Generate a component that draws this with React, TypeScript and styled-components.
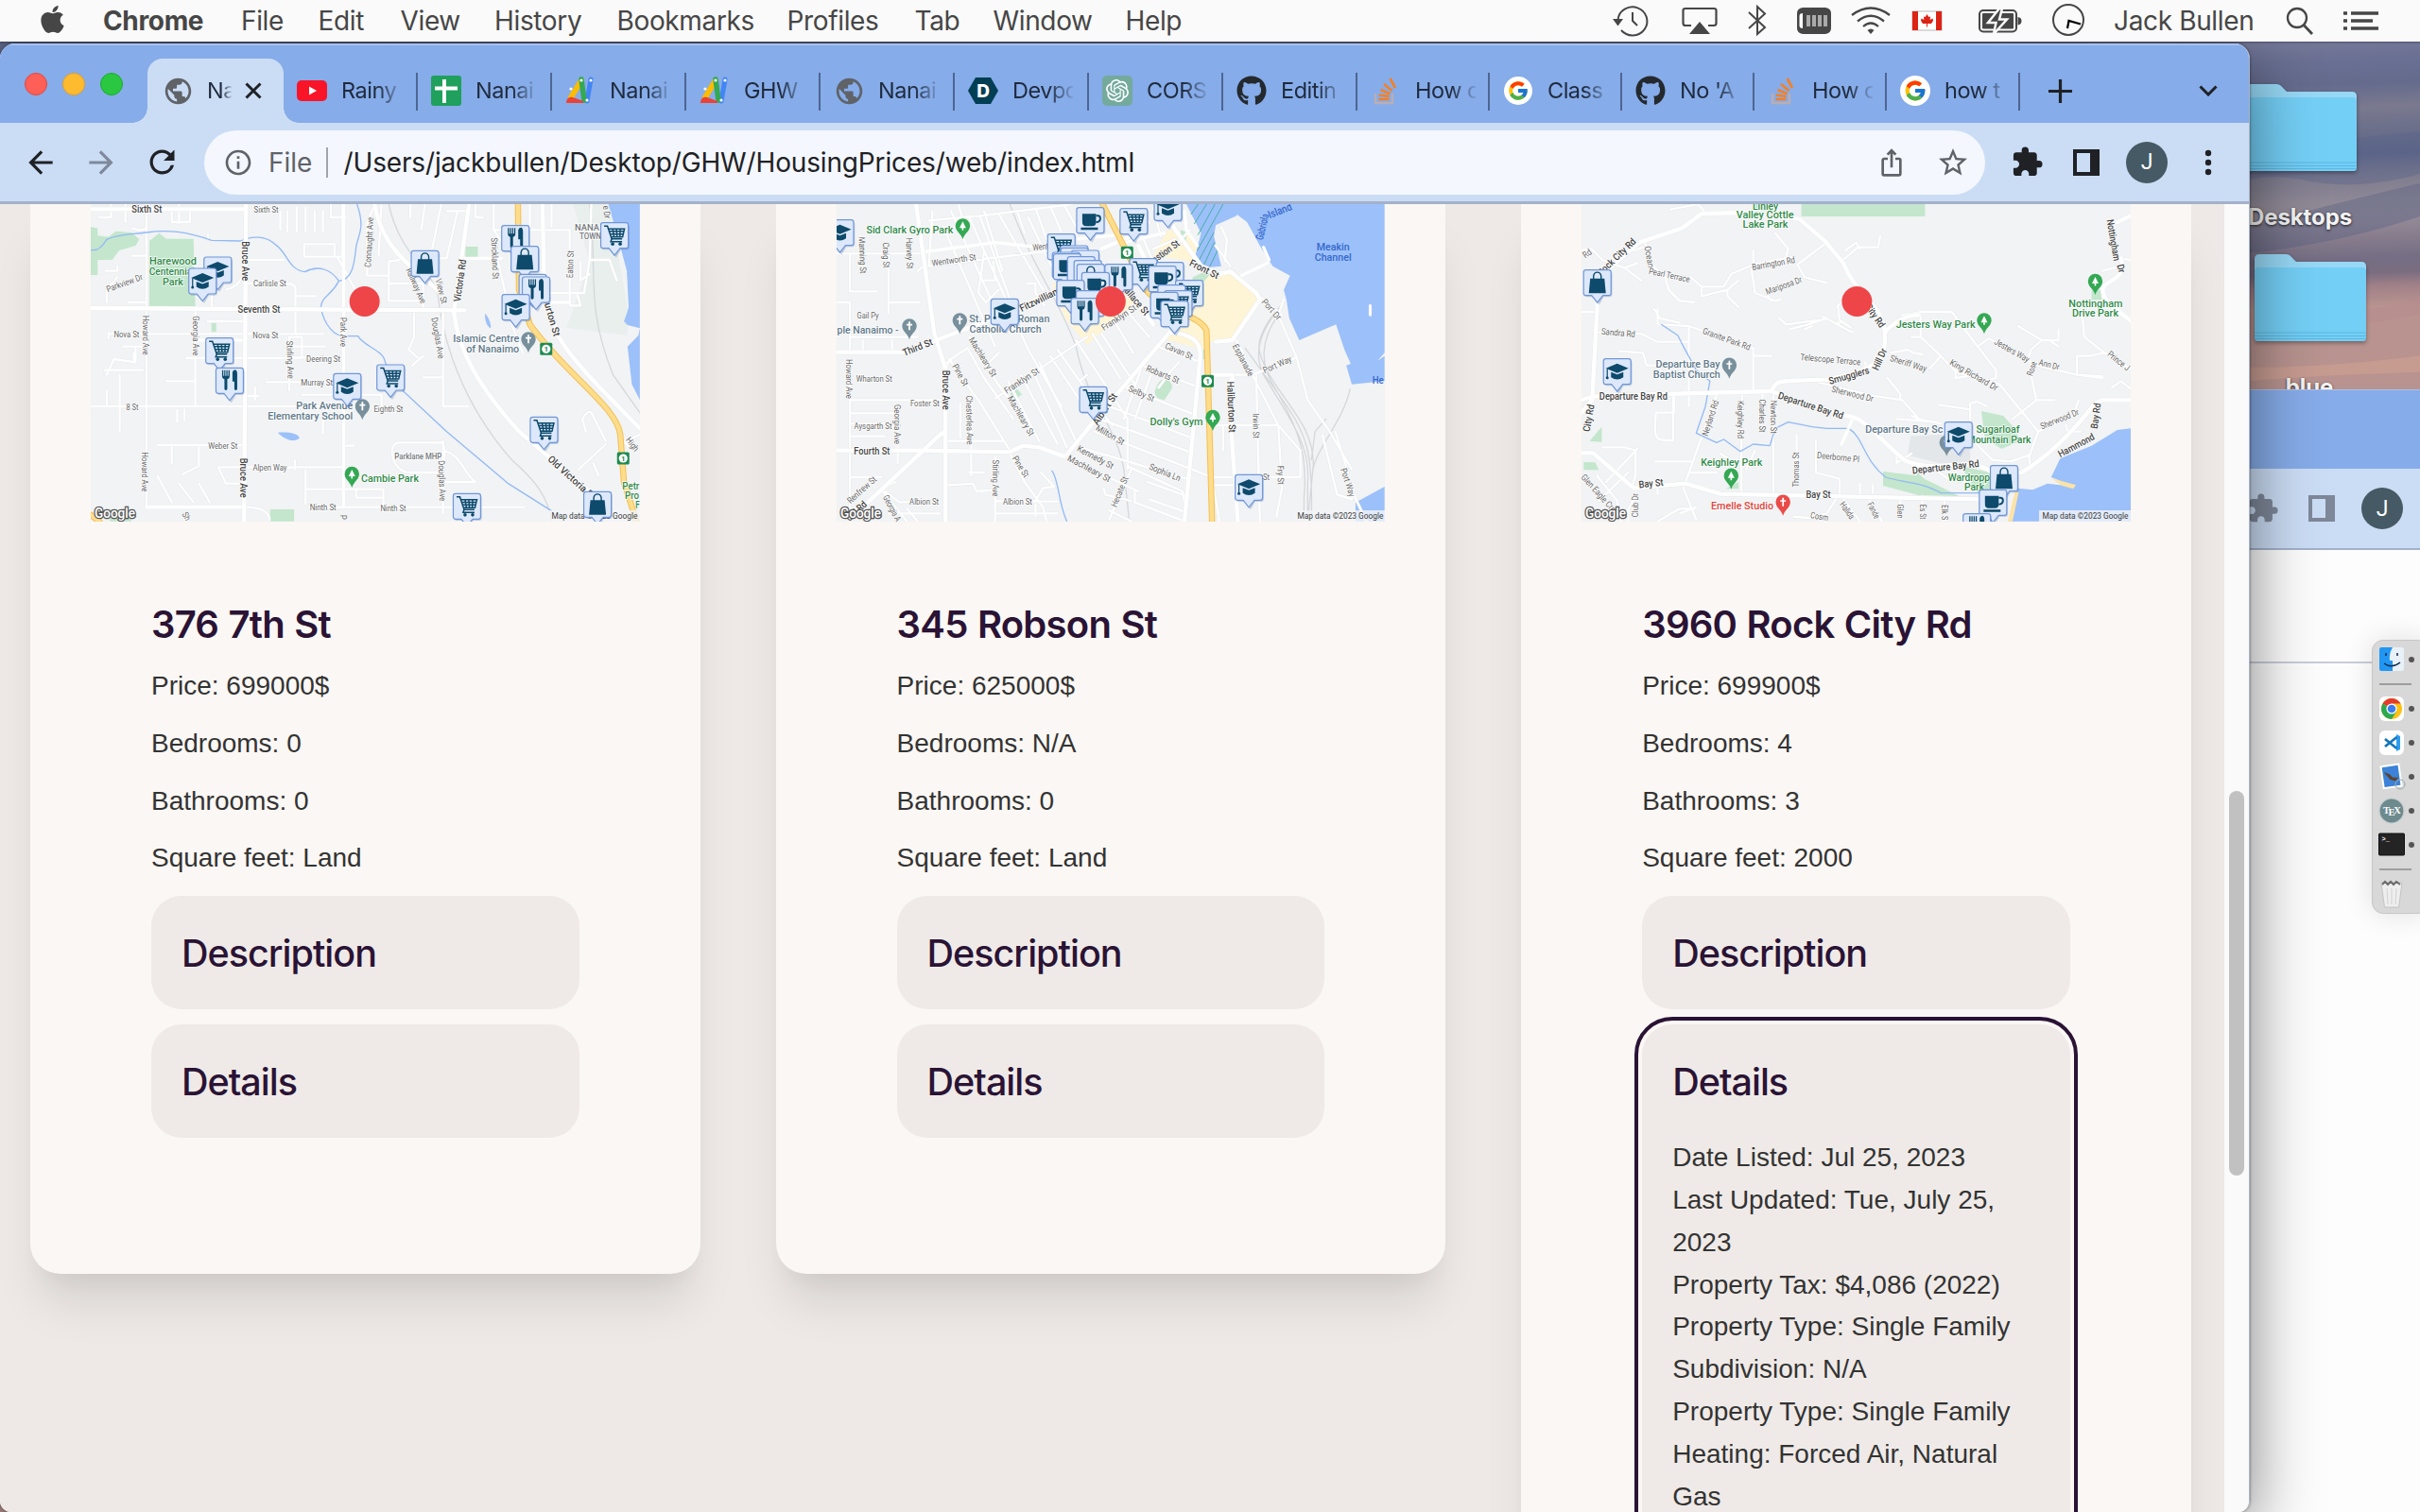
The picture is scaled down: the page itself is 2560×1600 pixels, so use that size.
import React from "react";
import styled, { createGlobalStyle } from "styled-components";
import { FaApple, FaGithub } from "react-icons/fa";
import { FcGoogle } from "react-icons/fc";
import { SiOpenai } from "react-icons/si";
import {
  MdArrowBack, MdArrowForward, MdRefresh, MdInfoOutline, MdIosShare, MdStarBorder,
  MdExtension, MdPublic,
} from "react-icons/md";

const Global = createGlobalStyle`
  html, body { margin: 0; padding: 0; }
  body { width: 2560px; height: 1600px; overflow: hidden; }
  * { box-sizing: border-box; }
`;

const UI = `Inter, "Liberation Sans", sans-serif`;

/* ---------- Desktop ---------- */

const Desktop = styled.div`
  position: relative;
  width: 2560px;
  height: 1600px;
  overflow: hidden;
  font-family: ${UI};
  background: linear-gradient(178deg, #5b6486 40px, #6f7496 90px, #777a9a 125px, #6a7093 150px,
    #646b8d 175px, #7a798f 200px, #6b6f8a 225px, #5f6687 250px, #7d7b8e 272px, #8f8996 300px, #928896 322px,
    #857b8b 340px, #756e84 360px, #7a6d80 376px, #a08088 390px, #b8938f 412px);
`;

const Wisps = styled.svg`
  position: absolute;
  left: 2370px;
  top: 44px;
`;

const MenuBar = styled.header`
  position: absolute;
  z-index: 5;
  left: 0;
  top: 0;
  width: 2560px;
  height: 44px;
  display: flex;
  align-items: center;
  background: #fafafa;
  color: #464646;
  font-size: 28px;
  letter-spacing: -0.35px;
  padding: 0 41px 0 40px;
  box-shadow: 0 1px 2px rgba(0, 0, 0, 0.35);
`;

const AppleMark = styled(FaApple)`
  width: 31px;
  height: 33px;
  margin-top: -4px;
  flex: none;
`;

const MenuItems = styled.nav`
  display: flex;
  margin-left: 38px;
  flex: 1;
`;

const MenuItem = styled.span<{ $w: number; $bold?: boolean }>`
  width: ${(p) => p.$w}px;
  font-weight: ${(p) => (p.$bold ? 700 : 400)};
  white-space: nowrap;
`;

const StatusArea = styled.div`
  display: flex;
  align-items: center;
  width: 813px;
  flex: none;
`;

const StatusSlot = styled.div<{ $w: number }>`
  width: ${(p) => p.$w}px;
  height: 44px;
  display: flex;
  align-items: center;
  flex: none;
  white-space: nowrap;
  svg { display: block; overflow: visible; }
`;

const DesktopItem = styled.figure<{ $x: number; $y: number }>`
  position: absolute;
  left: ${(p) => p.$x}px;
  top: ${(p) => p.$y}px;
  width: 160px;
  margin: 0;
  display: flex;
  flex-direction: column;
  align-items: center;
  gap: 30px;
  svg { display: block; filter: drop-shadow(0 2px 2px rgba(0, 0, 0, 0.35)); }
`;

const DesktopLabel = styled.figcaption`
  font-size: 24px;
  line-height: 32px;
  font-weight: 700;
  letter-spacing: -0.1px;
  color: #f4f4f4;
  margin-left: -2px;
  text-shadow: 0 1px 3px rgba(0, 0, 0, 0.8);
`;

/* ---------- Windows ---------- */

const BackWindow = styled.section`
  position: absolute;
  left: 1900px;
  top: 412px;
  width: 760px;
  height: 1400px;
  background: #fdfdfd;
  border-top: 1px solid #a9c1ee;
`;

const BackStrip = styled.div`
  height: 83px;
  background: #86ace9;
`;

const BackToolbar = styled.div`
  height: 86px;
  display: flex;
  align-items: center;
  padding-left: 450px;
  background: #cbddf5;
  border-bottom: 2px solid #a3b1cb;
`;

const BackLine = styled.div`
  height: 120px;
  border-bottom: 2px solid #c9cdd9;
`;

const BrowserWindow = styled.section`
  position: absolute;
  left: 0;
  top: 46px;
  width: 2380px;
  height: 1554px;
  display: flex;
  flex-direction: column;
  border-radius: 16px 16px 12px 12px;
  overflow: hidden;
  background: #fafafa;
  border-right: 1px solid #aab4c6;
`;

const WindowShadow = styled.div`
  position: absolute;
  left: 0;
  top: 46px;
  width: 2380px;
  height: 1554px;
  border-radius: 16px 16px 12px 12px;
  box-shadow: 0 20px 70px rgba(0, 0, 0, 0.5), 0 0 3px rgba(0, 0, 0, 0.5);
`;

const TabStrip = styled.div`
  height: 84px;
  flex: none;
  display: flex;
  align-items: flex-end;
  background: #86ace9;
  border-top: 2px solid #a9c4f0;
`;

const Lights = styled.div`
  display: flex;
  gap: 16px;
  width: 156px;
  height: 82px;
  padding: 29px 0 0 26px;
  flex: none;
`;

const Light = styled.i<{ $c: string; $b: string }>`
  width: 24px;
  height: 24px;
  border-radius: 50%;
  background: ${(p) => p.$c};
  border: 1px solid ${(p) => p.$b};
`;

const ActiveTab = styled.div`
  position: relative;
  width: 144px;
  height: 68px;
  flex: none;
  display: flex;
  align-items: center;
  padding-left: 16px;
  border-radius: 16px 16px 0 0;
  background: #cbddf5;
  &::before, &::after {
    content: "";
    position: absolute;
    bottom: 0;
    width: 16px;
    height: 16px;
  }
  &::before { left: -16px; background: radial-gradient(circle at 0 0, transparent 15.5px, #cbddf5 16px); }
  &::after { right: -16px; background: radial-gradient(circle at 100% 0, transparent 15.5px, #cbddf5 16px); }
`;

const Tab = styled.div<{ $w: number }>`
  width: ${(p) => p.$w}px;
  height: 68px;
  flex: none;
  display: flex;
  align-items: center;
  padding-left: 13px;
  background: linear-gradient(#4d6592, #4d6592) right 15px / 2px 40px no-repeat;
`;

const Favicon = styled.span`
  width: 34px;
  height: 34px;
  display: flex;
  align-items: center;
  justify-content: center;
  flex: none;
  svg { display: block; flex: none; }
`;

const TabTitle = styled.span<{ $w: number }>`
  width: ${(p) => p.$w}px;
  flex: none;
  margin-left: 14px;
  overflow: hidden;
  white-space: nowrap;
  font-size: 23.5px;
  line-height: 34px;
  letter-spacing: -0.5px;
  color: #1f2a3d;
  -webkit-mask-image: linear-gradient(90deg, #000 60%, rgba(0, 0, 0, 0.1) 100%);
  mask-image: linear-gradient(90deg, #000 60%, rgba(0, 0, 0, 0.1) 100%);
`;

const CloseIcon = styled.svg`
  margin-left: 14px;
`;

const StripTail = styled.div`
  flex: 1;
  height: 68px;
  display: flex;
  align-items: center;
  justify-content: space-between;
  padding: 0 33px 0 30px;
`;

const Toolbar = styled.div`
  height: 86px;
  flex: none;
  display: flex;
  align-items: center;
  background: #cbddf5;
  border-bottom: 3px solid #a3b1cb;
  padding-left: 24px;
  color: #1f2125;
`;

const NavButton = styled.span<{ $w: number; $dim?: boolean }>`
  width: ${(p) => p.$w}px;
  display: flex;
  flex: none;
  color: ${(p) => (p.$dim ? "#7f899b" : "#1f2125")};
`;

const Omnibox = styled.div`
  width: 1884px;
  height: 68px;
  border-radius: 34px;
  flex: none;
  display: flex;
  align-items: center;
  padding: 0 14px 0 20px;
  background: #f4f7fd;
  font-size: 28px;
  color: #5f6368;
`;

const Scheme = styled.span`
  width: 61px;
  margin-left: 16px;
  letter-spacing: 0;
`;

const Divider = styled.i`
  width: 1.5px;
  height: 32px;
  background: #a0a5ad;
`;

const Url = styled.span`
  flex: 1;
  margin-left: 17px;
  color: #202124;
  letter-spacing: -0.15px;
  white-space: nowrap;
`;

const OmniIcon = styled.span<{ $w: number }>`
  width: ${(p) => p.$w}px;
  display: flex;
  flex: none;
`;

const ToolIcons = styled.div<{ $dim?: boolean }>`
  display: flex;
  align-items: center;
  gap: 31px;
  padding-left: 27px;
  color: ${(p) => (p.$dim ? "#7e8899" : "#1f2125")};
`;

const Avatar = styled.span`
  width: 44px;
  height: 44px;
  margin-left: -3px;
  border-radius: 50%;
  display: flex;
  align-items: center;
  justify-content: center;
  background: #455a64;
  color: #fff;
  font-family: Roboto, sans-serif;
  font-size: 23px;
`;

const MoreIcon = styled.svg`
  margin-left: 8px;
`;

const Viewport = styled.main`
  flex: 1;
  min-height: 0;
  display: flex;
`;

const Page = styled.div`
  width: 2352px;
  height: 100%;
  overflow: hidden;
  background: #eee9e6;
  display: flex;
  align-items: flex-start;
  gap: 80px;
  padding-left: 32px;
`;

const ScrollTrack = styled.div`
  flex: 1;
  height: 100%;
  background: #fafafa;
  border-left: 1px solid #e8e8e8;
  display: flex;
  justify-content: center;
  padding-top: 621px;
`;

const ScrollThumb = styled.div`
  width: 16px;
  height: 407px;
  border-radius: 8px;
  background: #c1c1c1;
`;

/* ---------- Listing cards ---------- */

const Card = styled.article<{ $h: number }>`
  width: 708.6px;
  height: ${(p) => p.$h}px;
  flex: none;
  padding: 0 64px;
  border-radius: 0 0 32px 32px;
  background: #fbf7f4;
  box-shadow: 0 40px 50px -10px rgba(0, 0, 0, 0.1), 0 20px 20px -10px rgba(0, 0, 0, 0.04);
`;

const MapFrame = styled.svg`
  display: block;
  background: #f1f3f4;
  overflow: hidden;
`;

const CardBody = styled.div`
  padding: 79px 64px 0;
`;

const Address = styled.h3`
  margin: 0 0 13px;
  font-size: 40px;
  line-height: 60px;
  font-weight: 600;
  letter-spacing: -0.75px;
  word-spacing: 1px;
  color: #2a1335;
  white-space: nowrap;
`;

const Facts = styled.div`
  padding-bottom: 1px;
`;

const Fact = styled.p`
  margin: 0 0 16px;
  font-family: "Liberation Sans", Arial, sans-serif;
  font-size: 28px;
  line-height: 44.8px;
  color: #333;
`;

const Accordion = styled.section<{ $open?: boolean }>`
  height: ${(p) => (p.$open ? "900px" : "120px")};
  margin-bottom: 16px;
  padding: 0 32px;
  border-radius: 32px;
  background: #efeae7;
  outline: ${(p) => (p.$open ? "4px solid #2a1335" : "none")};
  outline-offset: 4px;
`;

const AccordionTitle = styled.h4`
  margin: 0;
  font-size: 39.5px;
  line-height: 122px;
  height: 119px;
  font-weight: 500;
  letter-spacing: -1px;
  color: #2a1335;
`;

const DetailLine = styled.p`
  margin: 0;
  font-family: "Liberation Sans", Arial, sans-serif;
  font-size: 28px;
  line-height: 44.8px;
  color: #333;
`;

/* ---------- Dock ---------- */

const Dock = styled.aside`
  position: absolute;
  left: 2509px;
  top: 677px;
  width: 60px;
  height: 290px;
  display: flex;
  flex-direction: column;
  border-radius: 12px;
  background: #d8d8d8;
  border: 1px solid #c6c6c6;
  box-shadow: 0 0 30px rgba(0, 0, 0, 0.12);
  padding: 2px 0 0 5px;
`;

const DockRow = styled.div`
  height: 36px;
  display: flex;
  align-items: center;
  gap: 1px;
  svg { display: block; }
`;

const Dot = styled.i`
  width: 6px;
  height: 6px;
  border-radius: 50%;
  background: #555;
`;

const DockRule = styled.div`
  height: 16px;
  padding: 7px 0 0 2px;
  &::before {
    content: "";
    display: block;
    width: 34px;
    height: 2px;
    background: #9e9e9e;
  }
`;

/* ---------- Small drawings ---------- */

const SidePanel = () => (
  <svg width="28" height="28" viewBox="0 0 28 28">
    <path fillRule="evenodd" fill="currentColor" d="M0 0H28V28H0ZM4 4V24H18V4Z" />
  </svg>
);

const FolderIcon = () => (
  <svg width="120" height="96" viewBox="0 0 120 96">
    <path d="M1 6Q1 1 6 1H34Q38 1 41 5L45 9H114Q119 9 119 14V40H1Z" fill="#97d8f6" />
    <path d="M1 19Q1 15 5 15H115Q119 15 119 19V90Q119 93 116 93H4Q1 93 1 90Z" fill="#74cff6" />
    <path d="M1 84H119M1 87.500H119M1 90.500H119" stroke="#5bb8e2" strokeWidth="1" />
  </svg>
);

const GoogleAds = () => (
  <svg width="32" height="32" viewBox="0 0 32 32">
    <path d="M17 5L6 23" stroke="#fbbc04" strokeWidth="6" strokeLinecap="round" />
    <path d="M27 4L23 27" stroke="#4285f4" strokeWidth="5" strokeLinecap="round" />
    <path d="M17 4L20 26" stroke="#34a853" strokeWidth="5.500" strokeLinecap="round" />
    <path d="M1 28Q2 22 8 23L19 27V29H1Z" fill="#ea4335" />
    <circle cx="17" cy="5" r="1.600" fill="#fff" /><circle cx="6" cy="14" r="1.600" fill="#fff" />
    <circle cx="27" cy="5" r="1.600" fill="#fff" /><circle cx="23" cy="26" r="1.600" fill="#fff" />
  </svg>
);

const Sheet = () => (
  <svg width="32" height="32" viewBox="0 0 32 32">
    <rect width="32" height="32" rx="3" fill="#1fa05c" />
    <path d="M14 4V29M4 13.500H28" stroke="#fff" strokeWidth="4" />
  </svg>
);

const YouTube = () => (
  <svg width="32" height="24" viewBox="0 0 32 24">
    <rect width="32" height="22" y="1" rx="5" fill="#f91428" />
    <path d="M13 7.500L21 12L13 16.500Z" fill="#fff" />
  </svg>
);

const Devpost = () => (
  <svg width="32" height="32" viewBox="0 0 32 32">
    <path d="M8 2H24L32 16L24 30H8L0 16Z" fill="#003e54" />
    <text x="16" y="23" textAnchor="middle" fontFamily="Inter" fontWeight="800" fontSize="19" fill="#fff">D</text>
  </svg>
);

const ChatGpt = () => (
  <svg width="32" height="32" viewBox="0 0 32 32">
    <rect width="32" height="32" rx="5" fill="#74aa9c" />
    <SiOpenai x="4" y="4" size={24} color="#fff" />
  </svg>
);

const Stack = () => (
  <svg width="26" height="30" viewBox="0 0 26 30">
    <path d="M2 18V28H20V18" fill="none" stroke="#b9aeb4" strokeWidth="2.500" />
    <path d="M5.500 24H16.500M5.700 19.500L16.500 21M7.500 14L17.500 18.200M11 8L19.500 15M17.500 2L23 12" stroke="#f48024" strokeWidth="2.600" />
  </svg>
);

const GoogleDisc = ({ r }: { r: number }) => (
  <svg width="34" height="34" viewBox="0 0 34 34">
    <circle cx="17" cy="17" r={r} fill="#fff" />
    <FcGoogle x={17 - r * 0.78} y={17 - r * 0.78} size={r * 1.56} />
  </svg>
);

const Globe = () => <MdPublic size={33} color="#5f6368" />;
const Hub = () => <FaGithub size={32} color="#24292e" />;

const favicons: Record<string, React.ReactNode> = {
  yt: <YouTube />, sheet: <Sheet />, ads: <GoogleAds />, globe: <Globe />, dev: <Devpost />,
  gpt: <ChatGpt />, hub: <Hub />, so: <Stack />, g: <GoogleDisc r={15} />, gBig: <GoogleDisc r={16} />,
};

const tabs: [string, string, number][] = [
  ["yt", "Rainy", 142], ["sheet", "Nanai", 142], ["ads", "Nanai", 142], ["ads", "GHW", 142],
  ["globe", "Nanai", 142], ["dev", "Devpo", 142], ["gpt", "CORS", 142], ["hub", "Editin", 142],
  ["so", "How c", 140], ["g", "Class", 140], ["hub", "No 'A", 140], ["so", "How c", 140], ["gBig", "how t", 141],
];

const menus: [string, number][] = [
  ["Chrome", 146], ["File", 81.500], ["Edit", 87], ["View", 99.500], ["History", 129.500],
  ["Bookmarks", 180], ["Profiles", 135], ["Tab", 83], ["Window", 140], ["Help", 70],
];

/* ---------- Maps ---------- */

type Kind = "road" | "street" | "park" | "poi" | "area" | "water" | "shop";
type Label = [string, number, number, number, number, Kind];
type Pin = ["cart" | "fork" | "bag" | "school" | "cup" | "none", number, number];
type Poi = [number, number, string];

interface MapData {
  ox: number;
  sx: number;
  land: [string, string][];
  river: string;
  minor: string;
  mid: string;
  major: string;
  rail: string;
  hatch: string;
  highway: string;
  labels: Label[];
  pois: Poi[];
  shields: [number, number][];
  pins: Pin[];
  dot: [number, number];
}

const kindStyle: Record<Kind, { fs: number; c: string; w: number }> = {
  road: { fs: 10.5, c: "#444444", w: 500 },
  street: { fs: 9.5, c: "#666666", w: 400 },
  park: { fs: 11.5, c: "#2f8a48", w: 500 },
  poi: { fs: 11.5, c: "#607889", w: 500 },
  area: { fs: 9, c: "#76797d", w: 500 },
  water: { fs: 11.5, c: "#3568cc", w: 500 },
  shop: { fs: 11.5, c: "#dd4238", w: 500 },
};

const PARK = "#c3e6cd";
const SEA = "#9cc0f9";
const SAND = "#fdf5d6";

const mapSeventh: MapData = {
  ox: 16, sx: 0.38265, hatch: "",
  land: [
    [PARK, "M16 90L35 95V118L65 122L85 104L130 108L150 130L140 150L95 165L75 195H35V243H16ZM178 135L205 110L225 128H300L305 342H178ZM1052 153H1086V186H1052ZM350 395H363V424H350ZM512 987H578V1025H512ZM57 987H128V1025H70Z"],
    ["#e8efec", "M1350 18H1450L1500 350V435L1332 410L1395 200Z"],
    [SEA, "M1447 18H1534V640L1512 590L1500 470L1530 435L1534 412L1500 402L1490 390L1498 365L1503 345L1498 230L1470 110ZM533 743C560 740 590 745 593 760C585 775 555 770 533 743ZM1106 365C1115 375 1125 400 1121 412C1110 405 1105 385 1106 365Z"],
  ],
  river: "M16 163Q40 170 60 130C100 110 130 115 170 108C230 98 280 105 350 133L430 135C460 118 500 118 525 145C560 170 560 225 608 233C645 210 680 225 702 262C742 258 745 200 750 150C758 110 774 90 752 18M702 262C680 310 655 310 652 345C660 400 690 440 720 437H755C770 470 825 480 830 520L860 590L1000 740L1170 905L1290 992",
  minor: "M170 18V980M305 360V660M16 660H780M280 507H600M200 783H440M225 580H300M70 430H660M130 182H165M240 40V75H290V40M130 95L150 100L170 97M56 230H90V215M60 330V290L90 250M340 390H440M350 342V300M390 290Q420 285 440 240M450 195H550M450 270H560Q582 270 582 290V430M582 310H640M600 440V505M540 40V100M560 40V105M585 30V105M610 30V105M635 40V105M658 40V105M680 18V60H720M606 150V185H712V18M606 145H690V185M700 190L745 285M600 440H565V610M570 505H630M570 470H665M500 583H690M600 623H820V660M715 300V980M658 700V748M715 785H745M368 853H715M368 853L390 905L445 905M170 783V975M240 790V840M315 790V850L270 875M200 880L240 965M260 905L300 965M315 905L345 965M450 980Q510 985 510 1020M610 862V970M610 923H825V975M750 923V950H820M850 800Q850 775 870 775H985Q1000 780 990 860V870H890Q850 855 850 800M990 770V1000M990 800C1040 810 1050 880 1080 900H990M620 980H1215M910 365V440L895 480L920 505M990 360V660H1060M935 568H985M800 18L780 80V245H840M840 200V325H935M840 270H935V360M840 200L870 195M960 190H1000L1030 40M985 18L960 160M940 18L930 100M900 18V60M1000 40H1060M1130 18V100L1160 150M1130 100H1340V340H1370L1360 300M1200 105V250M1230 18V90M1290 18V90M1275 300H1380L1395 195H1450L1470 260M1140 190L1170 340M1160 340L1210 490M96 560V740M60 610V660M55 545H160M60 560L80 510L140 520M105 470H160M140 475V520M135 490V515M470 600V640M440 627H480M255 670V710M275 670V705M165 330H120M480 860L570 855M580 830V860M1400 18L1395 195M1440 780L1365 860M1405 840L1420 880M1495 770L1534 750M1490 770L1505 790M340 115V130M65 425V445M112 18V75M72 18V60H40M260 18V80M905 530L935 500M1080 18V60H1100M820 18L812 180M1370 200V260L1395 240M1385 740L1375 700Q1390 670 1400 680L1440 770",
  mid: "M1048 190H1150M305 450L440 450M1275 330H1340M170 980H440M715 18V980",
  major: "M445 18L440 1025M16 348L1050 355M1062 18L1020 360C1030 480 1090 600 1200 740L1430 965M1265 18L1270 300L1310 440C1350 520 1440 620 1534 730M800 18C820 140 870 190 985 300M16 34H445",
  rail: "M840 18C870 180 960 230 975 300C1000 560 1110 740 1180 830C1250 900 1280 950 1290 1025M1395 18C1420 240 1380 330 1460 560L1534 680",
  highway: "M1197 18L1200 290L1230 400C1330 560 1470 660 1480 750L1490 900L1525 1025M16 1005L40 1025",
  labels: [
    ["Sixth St", 171, 34, 0, 32, "road"], ["Sixth St", 501, 36, 0, 26, "street"], ["Bruce Ave", 445, 199, 90, 42, "road"],
    ["Connaught Ave", 785, 139, -87, 53, "street"], ["Strickland St", 1134, 190, 88, 44, "street"],
    ["Victoria Rd", 1036, 261, -82, 45, "road"], ["Railway Ave", 916, 277, 66, 40, "street"], ["View St", 986, 294, 76, 27, "street"],
    ["Eaton St", 1341, 209, -88, 29, "street"], ["Parkview Dr", 109, 268, -20, 40, "street"], ["Carlisle St", 511, 268, 0, 35, "street"],
    ["Seventh St", 481, 351, 0, 45, "road"], ["Howard Ave", 168, 434, 90, 42, "street"], ["Georgia Ave", 308, 436, 90, 42, "street"],
    ["Nova St", 115, 431, 0, 27, "street"], ["Nova St", 499, 435, 0, 27, "street"], ["Park Ave", 716, 424, 90, 31, "street"],
    ["Douglas Ave", 976, 443, 80, 44, "street"], ["Stirling Ave", 568, 512, 88, 40, "street"], ["Deering St", 659, 508, 0, 36, "street"],
    ["Murray St", 641, 585, 0, 34, "street"], ["8 St", 131, 663, 0, 13, "street"], ["Eighth St", 839, 668, 0, 31, "street"],
    ["Weber St", 381, 785, 0, 31, "street"], ["Bruce Ave", 440, 887, 90, 42, "road"], ["Howard Ave", 166, 868, 90, 42, "street"],
    ["Alpen Way", 511, 855, 0, 36, "street"], ["Parklane MHP", 921, 818, 0, 50, "area"], ["Douglas Ave", 988, 896, 88, 43, "street"],
    ["Ninth St", 658, 980, 0, 28, "street"], ["Ninth St", 852, 983, 0, 27, "street"], ["Old Victoria Rd", 1348, 888, 42, 66, "road"],
    ["High", 1514, 780, 52, 16, "street"], ["Haliburton St", 1284, 350, 74, 60, "road"], ["e Dr", 1443, 43, 82, 14, "street"],
    ["P", 716, 1012, 90, 5, "street"], ["Sh", 281, 1009, 62, 9, "street"],
    ["Harewood", 243, 199, 0, 50, "park"], ["Centennial", 240, 232, 0, 48, "park"], ["Park", 243, 265, 0, 22, "park"],
    ["Islamic Centre", 1109, 443, 0, 70, "poi"], ["of Nanaimo", 1127, 476, 0, 56, "poi"],
    ["Park Avenue", 662, 657, 0, 60, "poi"], ["Elementary School", 623, 690, 0, 90, "poi"], ["Cambie Park", 843, 888, 0, 61, "park"],
    ["NANA", 1388, 93, 0, 26, "area"], ["TOWN", 1397, 119, 0, 23, "area"], ["Petr", 1509, 911, 0, 18, "park"], ["Pro", 1512, 943, 0, 15, "park"], ["F", 1528, 973, 0, 4.5, "park"],
  ],
  pois: [[1226, 490, "#78909c"], [767, 703, "#78909c"], [738, 918, "#34a853"]],
  shields: [[1275, 478], [1488, 825]],
  pins: [
    ["fork", 1190, 191], ["cart", 1464, 182], ["bag", 1216, 257], ["bag", 940, 271], ["school", 367, 291], ["school", 325, 327],
    ["none", 1238, 346], ["fork", 1247, 354], ["school", 1191, 410], ["cart", 372, 548], ["cart", 845, 633], ["fork", 400, 643],
    ["school", 725, 661], ["cart", 1269, 799], ["bag", 1417, 1036], ["cart", 1056, 1042],
  ],
  dot: [773, 327],
};

const mapRobson: MapData = {
  ox: 39, sx: 0.38903,
  land: [
    [SAND, "M1055 240L1130 240L1190 310L1110 455L1050 455L1030 385L1000 370L1010 290ZM940 100L1000 110L1030 180L1000 200L900 180ZM625 270L700 250L760 300L860 320L720 465L660 380ZM940 420L1010 390L1050 420L1040 480L940 450Z"],
    [SEA, "M990 18H1127V55L1070 85L1065 120L1085 215L1040 220L1015 180L1030 110ZM1127 18H1529V490L1510 515L1529 500V580L1440 590L1425 530L1437 525L1420 480L1397 400L1297 450L1270 380L1262 320L1255 290L1272 245L1225 215L1190 150L1155 75L1127 50ZM1529 915V1025H1450V965Z"],
    [PARK, "M1008 250L1040 232L1055 240L1030 275L1005 262ZM905 610Q915 570 935 573Q955 585 950 605L930 640Q900 635 905 610ZM510 620L530 605L543 622L525 638ZM975 100L992 108L988 138L974 128ZM1035 480H1050V510H1035Z"],
  ],
  hatch: "M1022 18L1003 50M1045 18L1012 80M1068 18L1022 115M1090 18L1020 165M1064 110L1025 195M1066 140L1036 215M1075 165L1052 220",
  river: "M625 865C645 900 640 960 665 1025",
  minor: "M290 215L625 165M39 175H265M75 175V290M75 295H150M180 175V330H265M180 290V365M75 440H260M75 330V480M75 510V1025M39 330H75M110 450V480M190 450V480M75 640H330M75 682H205V840M75 715H205M75 755H170M75 885H160M340 560V520L350 515M160 920L200 900M280 210L260 230M300 40L290 210M330 90L470 470M350 40L490 400M370 18L390 100M400 60L560 480L650 660M430 60L520 350M480 50L600 290M530 40L550 110M560 60L625 220M440 40L490 230M290 70L430 55L680 18M580 30L610 130M620 25L650 105M660 25L690 90M700 25L720 60M440 170L425 300L445 330L480 290M440 260H470L465 200M345 510L430 650L510 800M350 510L395 475L440 570L520 700M400 440L475 585L580 750M410 470L450 525L480 490M505 580L590 770M540 560L640 780M570 540L665 790M590 520L690 770M620 500L700 640M470 635L720 440M640 480L760 680L790 720M700 580L720 560M555 270H580V300L605 340M690 450L830 700L830 860M735 430L810 570M760 430L850 590L820 600M800 400L845 490M830 360L890 440M870 530L1025 600M825 600L1010 685M780 660L1005 760M755 700L1000 805M740 740L1060 885H1300V800L1240 720L1170 560M700 790L990 890M900 540L850 700M970 520L950 545L915 600M870 530L820 700M910 470L1030 520M660 820L860 930M830 850L980 930L990 1010M840 860L780 1020M780 990L840 1025M850 930V965L985 1025M885 900L980 940M890 955L985 995M1060 890L1080 1025M1060 910H1130M1240 720L1250 920L1235 1010M1180 560L1190 1025M1090 720V800M1110 720H1240M1060 720H1110M340 770H490M340 770V1025M375 650V760M405 620V880M470 820V1025M345 910L410 905L420 930L470 925M510 810L550 900L600 980L610 1025M580 970V1010M470 1000H640M470 960L640 962M400 870H440M540 860L550 900M595 870L630 915L600 920L580 960M170 930L210 965L290 960M160 925L230 1025M180 1000H320M230 985L260 1025M765 920L770 940L840 960M820 290L860 320M870 120L900 200M900 30L920 120M870 30L890 80M960 150L1000 100M900 160L960 130M1170 560L1290 505L1320 640L1380 740L1440 860M1360 750L1400 940L1440 955L1445 920M1395 740L1430 870M1255 320L1240 370L1290 505M1190 310L1250 370M1480 1025L1445 940M1490 340V370M1065 560H1170M1120 440L1150 500M1085 90L1100 130L1095 200M1070 150L1110 215",
  mid: "M275 170L470 140L630 160M680 130L810 115M820 140L930 110M985 40L990 100L1020 150M1140 245L1210 205M1200 155L1215 195",
  major: "M255 18L305 430L335 540V1025M39 488H220L310 450L400 410L540 345L640 290M39 800H270L510 805L545 785L590 790L660 820L730 720L890 500L945 425M110 980L270 805L320 750L335 740M920 18L960 100L1030 215L1080 240L1110 232L1180 300L1190 320L1115 450L1070 455M945 425C1010 430 1030 460 1028 500L985 1025M830 290L900 400M1110 580V700L1130 1025M760 160L840 120M860 150L880 200L830 220M1060 560L1115 560V600",
  rail: "M1255 330C1200 400 1180 450 1190 490C1220 620 1340 700 1335 850L1320 1025M1250 340C1180 430 1175 500 1200 560C1260 680 1330 780 1320 900V1025M1240 370C1190 450 1190 530 1230 600C1300 740 1320 820 1310 950V1025M1150 475L1240 620C1320 750 1335 800 1330 1025M510 18C580 240 640 310 690 470C720 650 800 720 820 860L835 1025M1370 700L1340 740L1330 830M1435 605C1420 700 1340 800 1335 860",
  highway: "M762 18L880 290C930 360 1030 370 1045 420L1050 620L1060 1025",
  labels: [
    ["Manning St", 110, 180, 88, 39, "street"], ["Craig St", 174, 180, 88, 27, "street"], ["Harvey St", 238, 174, 88, 33, "street"],
    ["Wentworth St", 358, 195, -8, 47, "street"], ["Wentw", 600, 152, -6, 22, "street"], ["Bastion St", 928, 172, -36, 38, "road"],
    ["Front St", 1039, 224, 26, 33, "road"], ["Gail Py", 124, 370, 0, 23, "street"], ["Fitzwilliam St", 605, 312, -26, 58, "road"],
    ["Wallace St", 850, 318, 50, 42, "road"], ["Franklyn St", 806, 378, -33, 42, "street"], ["Third St", 259, 472, -22, 33, "road"],
    ["Machleary St", 437, 503, 58, 47, "street"], ["Pine St", 376, 560, 60, 25, "street"], ["Franklyn St", 542, 578, -33, 42, "street"],
    ["Howard Ave", 73, 573, 90, 42, "street"], ["Wharton St", 141, 571, 0, 38, "street"], ["Bruce Ave", 337, 608, 90, 42, "road"],
    ["Chesterlea Ave", 401, 704, 89, 52, "street"], ["Foster St", 279, 649, 0, 31, "street"], ["Georgia Ave", 205, 717, 90, 42, "street"],
    ["Aysgarth St", 138, 723, 0, 40, "street"], ["Machleary St", 541, 690, 60, 47, "street"], ["Fourth St", 135, 803, 0, 38, "road"],
    ["Milton St", 783, 750, 30, 33, "street"], ["Kennedy St", 743, 821, 28, 42, "street"], ["Machleary St", 726, 857, 28, 50, "street"],
    ["Pine St", 540, 851, 58, 25, "street"], ["Stirling Ave", 473, 888, 90, 39, "street"], ["Hecate St", 808, 931, -68, 34, "street"],
    ["Sophia Ln", 932, 869, 22, 35, "street"], ["Albion St", 277, 961, 0, 31, "street"], ["Albion St", 531, 961, 0, 31, "street"],
    ["Renfrew St", 107, 925, -42, 38, "street"], ["Georgia A", 190, 983, 62, 30, "street"], ["Old Rd", 92, 992, -42, 26, "road"],
    ["Albert St", 768, 668, -56, 38, "road"], ["Cavan St", 970, 484, 24, 31, "street"], ["Robarts St", 926, 558, 22, 37, "street"],
    ["Selby St", 868, 619, 24, 29, "street"], ["Esplanade", 1145, 513, 62, 37, "street"], ["Port Way", 1237, 527, -24, 32, "street"],
    ["Port Dr", 1222, 352, 48, 26, "street"], ["Haliburton St", 1113, 662, 88, 54, "road"], ["Irwin St", 1180, 722, 89, 26, "street"],
    ["Fry St", 1247, 878, 88, 20, "street"], ["St", 1207, 885, 0, 7, "street"], ["Port Way", 1430, 901, 72, 31, "street"],
    ["Sid Clark Gyro Park", 238, 100, 0, 92, "park"], ["St. Peter's Roman", 509, 382, 0, 85, "poi"], ["Catholic Church", 498, 415, 0, 76, "poi"],
    ["ple Nanaimo -", 124, 418, 0, 65, "poi"], ["Dolly's Gym", 963, 709, 0, 56, "park"], ["Gabriola", 1196, 90, -76, 28, "water"],
    ["Island", 1244, 38, -22, 26, "water"], ["Meakin", 1389, 153, 0, 35, "water"], ["Channel", 1389, 187, 0, 39, "water"], ["He", 1511, 576, 0, 12, "water"],
  ],
  pois: [[382, 130, "#34a853"], [374, 430, "#78909c"], [237, 448, "#78909c"], [1062, 738, "#34a853"]],
  shields: [[829, 172], [1048, 580]],
  pins: [
    ["school", 940, 94], ["cup", 729, 134], ["cart", 847, 137], ["school", 48, 173], ["cart", 650, 218], ["none", 685, 255],
    ["none", 686, 262], ["none", 715, 270], ["none", 663, 276], ["cup", 666, 281], ["none", 704, 290], ["none", 722, 302],
    ["bag", 730, 314], ["cart", 873, 296], ["cup", 945, 308], ["fork", 806, 314], ["cup", 925, 320], ["cup", 743, 340],
    ["cart", 998, 365], ["none", 950, 380], ["cup", 675, 365], ["cart", 968, 398], ["cup", 930, 403], ["none", 728, 398],
    ["school", 496, 424], ["fork", 714, 422], ["cart", 958, 431], ["cart", 737, 703], ["school", 1160, 982],
  ],
  dot: [784, 327],
};

const mapRockCity: MapData = {
  ox: 33, sx: 0.38903, hatch: "",
  land: [
    [PARK, "M631 18H967V57H631ZM505 18H555V40H505ZM88 725V773L55 770ZM39 837L70 838L80 862H39ZM460 900V922L425 922ZM853 867L945 880V868L965 890L1060 945L950 942L853 912ZM1120 675L1180 690L1210 730L1225 770L1175 795L1130 760ZM1065 850L1145 870V935H1110ZM1420 290H1447V322H1420ZM345 830L380 862Z"],
    ["#e3e7ea", "M928 755L1090 745V850H1040L920 815Z"],
    [SEA, "M1527 730L1490 735L1420 785L1335 825L1310 885L1375 915L1300 905L1260 925L1218 920L1195 1025H1527Z"],
    ["#fbe3a8", "M1310 888L1378 910L1370 922L1340 912ZM1212 930L1222 932L1205 1025H1192Z"],
  ],
  river: "M250 400L295 435L310 470L345 545L382 580L370 660L345 745L400 775L420 765L465 803L500 780L545 785L560 730L595 710L660 725L700 730L760 730C800 760 800 830 860 885C900 900 960 900 1010 935H1120",
  minor: "M33 165L60 160L90 195L150 220L195 260M130 215L140 180L200 155M150 220L185 205M205 135L215 200L260 250H330L360 280H420L440 240L500 210L610 185M260 250L270 290L300 325L340 330M360 280V310L430 290L460 260M430 290V310L460 345M500 215V165M495 225L505 300L560 325L575 320M540 310L550 325M560 110L595 160L585 205M620 210L700 140M620 210L640 250L700 268M740 200L785 155L840 155L845 120M750 165L780 140L790 160M275 35L350 18L370 45M75 425L195 430L240 455H320M240 350V400L325 405V660M230 350L245 380L300 395M325 405L500 475V610M500 500H550M135 485L200 490L210 530H255M570 380L590 400L620 395L690 385M600 415L650 400L700 380M640 415L660 405M690 375L760 420L770 425M735 385L730 340L750 320M725 400L740 390L765 410M400 625L310 920L345 1020M285 630V680H235L233 740Q235 768 260 768H282V630M470 620V680M525 620V650M555 615V930M468 700V940M618 750V880M670 770V870L735 890V940M232 835H330M410 810L440 830H490M325 870H400M90 790H150L180 800V880L170 915M100 900L185 795M160 870L80 960M33 360H65M240 905V940M790 905V940M825 910V935M680 585L820 625L905 640L950 700L1010 715M865 570L900 620V640M890 700L1000 710M950 700L930 690M805 520V530M875 490L920 480L935 490L960 495M980 540L1010 500L955 440V370M950 440H930M905 370L960 360H1040L1110 470L1160 545V570L1130 580M1110 470L1140 445L1255 520L1290 535L1380 560L1450 570M1255 520V560L1270 640L1205 700M1270 640H1320M1285 450L1255 480L1250 500M1220 405L1285 450H1330V415M1305 450L1330 470M1010 500L1050 550L1170 590L1240 690L1275 740L1250 820L1255 860M1005 655L1090 670V650L1110 645L1135 660M1090 670V760L1150 830L1200 835L1250 815M1275 740L1370 690L1385 640M1350 720L1355 740L1390 740M1395 370L1400 440L1455 490L1525 540M1455 490L1415 500H1385M1380 560V500M1500 190L1527 195M1450 230L1500 215M1390 560L1450 565M1475 600L1500 580L1527 605M960 945V1000M900 945V980M1020 950V990M740 945L790 1025M810 945L850 1025M660 1010L700 1000L730 945M180 940L160 990V1025M75 880L130 960L140 1025M300 1000L345 980M240 1025L300 985L340 985M610 1010L660 1015M890 820V840L930 810M840 750L880 730M1000 865L1030 890L1080 900M1050 530V570L1080 565M505 800L480 860",
  mid: "M740 780L770 700M1527 385L1490 350L1450 310",
  major: "M33 640Q60 625 120 625L550 612C560 580 570 580 620 578L700 575C850 540 860 510 858 425C850 330 780 310 745 205L695 135L625 65L580 60M490 45L360 48L305 95L190 140L80 250L62 640L33 680M858 425Q900 370 950 370M33 808H65L175 920L315 905L410 938L1110 955M555 615L750 690C800 690 830 750 910 830C1000 880 1080 810 1150 870L1230 870Q1330 800 1430 650L1450 640H1527M1527 55L1490 75M1500 190C1520 260 1450 260 1450 290C1455 340 1500 360 1527 390",
  rail: "", highway: "",
  labels: [
    ["Linley", 533, 24, 0, 27, "park"], ["Valley Cottle", 532, 51, 0, 61, "park"], ["Lake Park", 533, 82, 0, 48, "park"],
    ["Rock City Rd", 128, 185, -44, 52, "road"], ["Rd", 48, 174, -35, 9, "street"], ["Ocean", 218, 185, 80, 23, "street"],
    ["Pearl Terrace", 272, 243, 12, 44, "street"], ["Barrington Rd", 555, 206, -10, 46, "street"], ["Mariposa Dr", 583, 276, -20, 40, "street"],
    ["City Rd", 832, 372, 55, 28, "road"], ["Sandra Rd", 133, 426, 5, 36, "street"], ["Granite Park Rd", 428, 446, 20, 53, "street"],
    ["Telescope Terrace", 710, 511, 5, 64, "street"], ["Smugglers", 760, 562, -16, 44, "road"], ["Hill Dr", 843, 510, -66, 24, "road"],
    ["Sheriff Way", 922, 523, 17, 40, "street"], ["Sherwood Dr", 770, 620, 14, 45, "street"], ["King Richard Dr", 1100, 560, 30, 57, "street"],
    ["Jesters Way", 1204, 482, 30, 41, "street"], ["Rose", 1257, 540, -72, 15, "street"], ["Ann Dr", 1305, 527, 14, 22, "street"],
    ["Prince J", 1494, 515, 38, 27, "street"], ["Nottingham", 1480, 132, 80, 44, "road"], ["Dr", 1501, 222, 75, 9, "road"],
    ["Departure Bay Rd", 174, 627, 0, 72, "road"], ["Departure Bay Rd", 657, 657, 18, 72, "road"], ["Departure Bay Rd", 1023, 852, -6, 71, "road"],
    ["Neyland Rd", 383, 697, -72, 39, "street"], ["Keighley Rd", 467, 702, 90, 40, "street"], ["Charles St", 525, 690, 90, 35, "street"],
    ["Newton St", 557, 694, 90, 35, "street"], ["Thomas St", 616, 861, -90, 37, "street"], ["Deerborne Pl", 731, 821, 6, 45, "street"],
    ["City Rd", 52, 697, -80, 29, "road"], ["Sherwood Dr", 1333, 700, -22, 43, "street"], ["Hammond", 1378, 783, -28, 42, "road"],
    ["Bay Rd", 1431, 690, -82, 27, "road"], ["Glen Eagle Cre", 80, 935, 48, 50, "street"], ["Bay St", 222, 904, -6, 26, "road"],
    ["Bay St", 677, 941, 0, 26, "road"], ["Club Dr", 179, 974, -90, 25, "street"], ["Halida", 756, 990, 55, 20, "street"],
    ["Fande", 828, 990, 62, 18, "street"], ["Cosm", 680, 1009, 10, 19, "street"], ["Glen", 901, 993, 90, 15, "street"],
    ["Es St", 962, 995, 90, 16, "street"], ["Elk S", 1021, 997, 90, 16, "street"],
    ["Departure Bay", 322, 525, 0, 68, "poi"], ["Baptist Church", 319, 557, 0, 71, "poi"], ["Jesters Way Park", 996, 400, 0, 84, "park"],
    ["Nottingham", 1431, 332, 0, 57, "park"], ["Drive Park", 1430, 364, 0, 49, "park"], ["Departure Bay Sc", 910, 732, 0, 82, "poi"],
    ["Sugarloaf", 1165, 732, 0, 46, "park"], ["Mountain Park", 1168, 764, 0, 68, "park"], ["Keighley Park", 441, 836, 0, 65, "park"],
    ["Emelle Studio", 470, 976, 0, 66, "shop"], ["Wardropper", 1098, 885, 0, 53, "park"], ["Park", 1101, 916, 0, 21, "park"],
  ],
  pois: [[435, 572, "#78909c"], [1128, 430, "#34a853"], [1430, 306, "#34a853"], [440, 923, "#34a853"], [581, 1007, "#ea4a48"], [1026, 818, "#78909c"]],
  shields: [],
  pins: [
    ["school", 130, 614], ["bag", 76, 332], ["school", 1058, 815], ["bag", 1182, 953], ["cup", 1152, 1030], ["fork", 1108, 1106],
  ],
  dot: [782, 327],
};

const INK = "#0d4a6b";

const glyphs: Record<Pin[0], React.ReactNode> = {
  cart: (
    <g fill="none" stroke={INK}>
      <path d="M-11 -10H-7.500L-3 3.500H8M-6 -7H10.500L8.500 1.500H-4M-5.500 -4.300H10M-4.700 -1.500H9.300M-2 -7L-0.500 1.500M2 -7L2.700 1.500M6 -7L5.700 1.500" strokeWidth="1.500" />
      <path d="M-3 3.500L-4 6.500H8" strokeWidth="1.500" />
      <circle cx="-2" cy="9" r="1.800" fill={INK} stroke="none" /><circle cx="6" cy="9" r="1.800" fill={INK} stroke="none" />
    </g>
  ),
  fork: (
    <g fill={INK}>
      <path d="M-8 -11V-5Q-8 -2 -5.500 -1.500V9Q-4 11.500 -2.500 9V-1.500Q0 -2 0 -5V-11H-1.300V-5H-2.300V-11H-3.500V-5H-4.500V-11H-5.700V-5H-6.700V-11Z" />
      <path d="M3 -9Q3.500 -11.500 6 -11.500Q8 -11 8 -7V9Q6.500 11.500 5 9V1H3Z" />
    </g>
  ),
  bag: (
    <g>
      <path d="M-7.500 -4.500H7.500L9 11H-9Z" fill={INK} />
      <path d="M-4 -3V-7Q-3.500 -11 0 -11Q3.500 -11 4 -7V-3" fill="none" stroke={INK} strokeWidth="1.400" />
    </g>
  ),
  school: (
    <g fill={INK}>
      <path d="M0 -8.500L12 -3.500L0 1.500L-12 -3.500Z" />
      <path d="M-6.500 0.500L0 3L6.500 0.500V6Q0 10.500 -6.500 6Z" />
      <path d="M-10.500 -3V6" stroke={INK} strokeWidth="1.200" /><circle cx="-10.500" cy="6.500" r="1.500" />
    </g>
  ),
  cup: (
    <g>
      <path d="M-8.500 -7H6V2Q6 6 2 6H-4.500Q-8.500 6 -8.500 2ZM-10 7.500H8V10H-10Z" fill={INK} />
      <path d="M6 -5H8Q10.500 -5 10.500 -2Q10.500 1.500 6 2" fill="none" stroke={INK} strokeWidth="2" />
    </g>
  ),
  none: null,
};

const ListingMap = ({ data }: { data: MapData }) => {
  const px = (x: number) => (x - data.ox) * data.sx;
  const py = (y: number) => (y - 18) / 3;
  const tf = `scale(${data.sx} 0.33333) translate(${-data.ox} -18)`;
  const line = { fill: "none", vectorEffect: "non-scaling-stroke" as const, strokeLinejoin: "round" as const, strokeLinecap: "round" as const };
  return (
    <MapFrame width="580.6" height="336" viewBox="0 0 580.6 336">
      <g transform={tf}>
        {data.land.map(([c, d], i) => <path key={i} d={d} fill={c} />)}
        <path d={data.hatch} {...line} stroke="#3cae9b" strokeWidth="0.900" />
        <path d={data.rail} {...line} stroke="#d5d7da" strokeWidth="1.300" />
        <path d={data.minor} {...line} stroke="#e6e8ea" strokeWidth="3.200" />
        <path d={data.minor} {...line} stroke="#fff" strokeWidth="2.300" />
        <path d={data.river} {...line} stroke="#93b9f5" strokeWidth="1.300" />
        <path d={data.mid} {...line} stroke="#fff" strokeWidth="3.200" />
        <path d={data.major} {...line} stroke="#e6e8ea" strokeWidth="5.200" />
        <path d={data.major} {...line} stroke="#fff" strokeWidth="4.400" />
        <path d={data.highway} {...line} stroke="#f3bf55" strokeWidth="6.500" />
        <path d={data.highway} {...line} stroke="#fddd8c" strokeWidth="4.500" />
      </g>
      {data.labels.map(([s, x, y, r, w, k], i) => {
        const st = kindStyle[k];
        return (
          <text key={i} transform={`translate(${px(x)} ${py(y)}) rotate(${r})`} y={st.fs * 0.36} textAnchor="middle"
            textLength={w} lengthAdjust="spacingAndGlyphs" fontFamily="Roboto, sans-serif" fontSize={st.fs}
            fontWeight={st.w} fill={st.c} stroke={k === "water" ? "none" : "#fff"} strokeWidth="1.400" paintOrder="stroke">{s}</text>
        );
      })}
      {data.shields.map(([x, y], i) => (
        <g key={i} transform={`translate(${px(x)} ${py(y)})`}>
          <rect x="-6.500" y="-6.500" width="13" height="13" rx="1.500" fill="#1f8a52" />
          <circle r="4.600" fill="#fff" />
          <text y="2.800" textAnchor="middle" fontFamily="Roboto, sans-serif" fontSize="8" fontWeight="700" fill="#1f8a52">1</text>
        </g>
      ))}
      {data.pois.map(([x, y, c], i) => (
        <g key={i} transform={`translate(${px(x)} ${py(y)})`}>
          <path d="M0 0C-1.500 -6 -7.700 -8.500 -7.700 -14.500A7.700 7.700 0 0 1 7.700 -14.500C7.700 -8.500 1.500 -6 0 0Z" fill={c} />
          {c === "#34a853"
            ? <path d="M0 -19L3.500 -12H0.800V-9.500H-0.800V-12H-3.500Z" fill="#fff" />
            : <path d="M-0.900 -19H0.900V-16.500H3V-14.800H0.900V-10H-0.900V-14.800H-3V-16.500H-0.900Z" fill="#fff" />}
        </g>
      ))}
      <text x="4" y="332" fontFamily="Roboto, sans-serif" fontWeight="500" fontSize="14" textLength="43" lengthAdjust="spacingAndGlyphs" fill="#fff" stroke="#555" strokeWidth="2.600" paintOrder="stroke">Google</text>
      <rect x="484" y="324" width="97" height="12" fill="#f2f4f7" opacity="0.800" />
      <text x="578.500" y="333.300" textAnchor="end" fontFamily="Roboto, sans-serif" fontSize="9" textLength="91" lengthAdjust="spacingAndGlyphs" fill="#3c3c3c">Map data ©2023 Google</text>
      {data.pins.map(([k, x, y], i) => (
        <g key={i} transform={`translate(${px(x)} ${py(y)})`}>
          <path d="M-12 -34.500H12Q15 -34.500 15 -31.500V-10.500Q15 -7.500 12 -7.500H6L1 0.800L-5 -7.500H-12Q-14 -7.500 -14 -10.500V-31.500Q-14 -34.500 -12 -34.500Z" fill="#3b5f99" opacity="0.250" transform="translate(0.800 1.200)" />
          <path d="M-12 -35H12Q14.500 -35 14.500 -32.500V-10.500Q14.500 -8 12 -8H6L0 -0.500L-6 -8H-12Q-14.500 -8 -14.500 -10.500V-32.500Q-14.500 -35 -12 -35Z" fill="#dde8fb" stroke="#7096d8" strokeWidth="1.200" />
          <g transform="translate(0 -21.500)">{glyphs[k]}</g>
        </g>
      ))}
      <circle cx={px(data.dot[0])} cy={py(data.dot[1])} r="16" fill="#ee4549" />
    </MapFrame>
  );
};

interface Listing {
  address: string;
  facts: string[];
  map: MapData;
  height: number;
  details?: string[];
}

const listings: Listing[] = [
  { address: "376 7th St", facts: ["Price: 699000$", "Bedrooms: 0", "Bathrooms: 0", "Square feet: Land"], map: mapSeventh, height: 1132 },
  { address: "345 Robson St", facts: ["Price: 625000$", "Bedrooms: N/A", "Bathrooms: 0", "Square feet: Land"], map: mapRobson, height: 1132 },
  {
    address: "3960 Rock City Rd",
    facts: ["Price: 699900$", "Bedrooms: 4", "Bathrooms: 3", "Square feet: 2000"],
    map: mapRockCity,
    height: 1900,
    details: [
      "Date Listed: Jul 25, 2023", "Last Updated: Tue, July 25, 2023", "Property Tax: $4,086 (2022)",
      "Property Type: Single Family", "Subdivision: N/A", "Property Type: Single Family", "Heating: Forced Air, Natural Gas",
    ],
  },
];

/* ---------- Status icons ---------- */

const S = "#464646";

const StatusIcons = () => (
  <StatusArea>
    <StatusSlot $w={73}>
      <svg width="38" height="36" viewBox="0 0 38 36">
        <path d="M5.500 17A15.500 15 0 1 1 9 28" fill="none" stroke={S} strokeWidth="2" />
        <path d="M0 16H11L5.500 23.500Z" fill={S} /><path d="M21 9V18L26 23" fill="none" stroke={S} strokeWidth="2" />
      </svg>
    </StatusSlot>
    <StatusSlot $w={70}>
      <svg width="38" height="30" viewBox="0 0 38 30">
        <path d="M10 20H4Q1.500 20 1.500 17.500V4Q1.500 2 4 2H34Q36.500 2 36.500 4V17.500Q36.500 20 34 20H28" fill="none" stroke={S} strokeWidth="2.200" />
        <path d="M19 16L30 29H8Z" fill={S} />
      </svg>
    </StatusSlot>
    <StatusSlot $w={52}>
      <svg width="20" height="32" viewBox="0 0 20 32">
        <path d="M1 7L18 23L10 30V1L18 8.500L1 24" fill="none" stroke={S} strokeWidth="2" />
      </svg>
    </StatusSlot>
    <StatusSlot $w={57}>
      <svg width="36" height="28" viewBox="0 0 36 28">
        <path d="M6 0H30Q36 1 36 6V22Q36 27 30 28H6Q0 27 0 22V6Q0 1 6 0Z" fill={S} />
        <path d="M6 6Q2.500 6 2.500 9V19Q2.500 22 6 22Z" fill="#fafafa" />
        <path d="M12 8V20M18 8V20M24 8V20M30 8V20" stroke="#aaa" strokeWidth="4" />
      </svg>
    </StatusSlot>
    <StatusSlot $w={65}>
      <svg width="42" height="30" viewBox="0 0 42 30">
        <path d="M1 9Q21 -6 41 9M7 15.500Q21 4 35 15.500M13 21Q21 14 29 21" fill="none" stroke={S} strokeWidth="2.300" />
        <path d="M17.500 25Q21 22 24.500 25L21 29Z" fill={S} />
      </svg>
    </StatusSlot>
    <StatusSlot $w={70}>
      <svg width="31" height="20" viewBox="0 0 31 20">
        <rect width="31" height="20" fill="#fff" stroke="#aaa" strokeWidth="0.800" />
        <path d="M0 0H6V20H0ZM25 0H31V20H25Z" fill="#dd2316" />
        <path d="M15.500 3L17.300 6L19 5.500L18.700 9L21.500 7.500L22 10L20 13H16V16.500H15V13H11L9 10L9.500 7.500L12.300 9L12 5.500L13.700 6Z" fill="#dd2316" />
      </svg>
    </StatusSlot>
    <StatusSlot $w={78}>
      <svg width="46" height="25" viewBox="0 0 46 25">
        <rect x="1" y="1" width="39" height="22.500" rx="4" fill="none" stroke={S} strokeWidth="2" />
        <rect x="4" y="4" width="33" height="16.500" rx="1" fill={S} />
        <path d="M41.500 8Q45.500 8.500 45.500 12Q45.500 16 41.500 16.500Z" fill={S} />
        <path d="M22 -1L10 14H18.500L16 26L30 10.500H22L25 -1Z" fill={S} stroke="#fafafa" strokeWidth="2.500" />
      </svg>
    </StatusSlot>
    <StatusSlot $w={65}>
      <svg width="34" height="34" viewBox="0 0 34 34">
        <circle cx="17" cy="16" r="16" fill="none" stroke={S} strokeWidth="2" />
        <path d="M16 25L17.500 17L30 20.500" fill="none" stroke="#000" strokeWidth="2.200" />
      </svg>
    </StatusSlot>
    <StatusSlot $w={182}>Jack Bullen</StatusSlot>
    <StatusSlot $w={61}>
      <svg width="30" height="30" viewBox="0 0 30 30">
        <circle cx="12" cy="12" r="10" fill="none" stroke={S} strokeWidth="2.300" /><path d="M19 19.500L28 29" stroke={S} strokeWidth="2.800" />
      </svg>
    </StatusSlot>
    <StatusSlot $w={40}>
      <svg width="37" height="20" viewBox="0 0 37 20">
        <path d="M0 2H4M0 10H4M0 18H4M8 2H37M8 10H31M8 18H37" stroke={S} strokeWidth="3.600" />
      </svg>
    </StatusSlot>
  </StatusArea>
);

const DockApps = () => (
  <>
    <DockRow>
      <svg width="32" height="28" viewBox="0 0 32 28">
        <rect x="2" y="1" width="26" height="25" rx="2" fill="#e8f0f8" />
        <path d="M4 1H16Q12 8 13 15H16V26H4Q2 26 2 24V3Q2 1 4 1Z" fill="#2196f3" />
        <path d="M9 7V10M21 7V10M7 18Q15 24 24 17" stroke="#0c2a4a" strokeWidth="1.500" fill="none" />
      </svg>
      <Dot />
    </DockRow>
    <DockRule />
    <DockRow>
      <svg width="32" height="28" viewBox="0 0 32 28">
        <rect x="2" y="1" width="26" height="26" rx="6" fill="#fff" />
        <circle cx="15" cy="14" r="11" fill="#fbc116" />
        <path d="M15 14L5.500 8.500A11 11 0 0 1 24.500 8.500H15Z" fill="#e33b2e" />
        <path d="M15 14L5.500 8.500A11 11 0 0 0 15 25L20 17Z" fill="#2da94f" />
        <circle cx="15" cy="14" r="5.600" fill="#fff" /><circle cx="15" cy="14" r="4.300" fill="#3b7ded" />
      </svg>
      <Dot />
    </DockRow>
    <DockRow>
      <svg width="32" height="28" viewBox="0 0 32 28">
        <rect x="2" y="1" width="26" height="26" rx="6" fill="#fff" />
        <path d="M20 5L24 7V21L20 23Z" fill="#2a9df0" />
        <path d="M20.500 8L8 18M20.500 20L8 10" stroke="#1177bd" strokeWidth="2.800" />
      </svg>
      <Dot />
    </DockRow>
    <DockRow>
      <svg width="32" height="30" viewBox="0 0 32 30">
        <g transform="rotate(-8 14 14)">
          <rect x="4" y="2" width="21" height="25" fill="#fff" /><rect x="6" y="4" width="17" height="21" fill="#3b82d8" />
          <path d="M7 9L13 12L16 16L22 17L18 20L13 18Z" fill="#5b4430" />
        </g>
        <circle cx="24" cy="23" r="5" fill="none" stroke="#9aa" strokeWidth="1" />
      </svg>
      <Dot />
    </DockRow>
    <DockRow>
      <svg width="32" height="28" viewBox="0 0 32 28">
        <circle cx="15" cy="14" r="13" fill="#6d8a8e" stroke="#c5cccd" strokeWidth="1.200" />
        <text y="17" textAnchor="middle" fontFamily="Liberation Serif, serif" fontWeight="700" fontSize="10.500" fill="#fff">
          <tspan x="9.500">T</tspan><tspan x="15" dy="2">E</tspan><tspan x="21" dy="-2">X</tspan>
        </text>
      </svg>
      <Dot />
    </DockRow>
    <DockRow>
      <svg width="32" height="28" viewBox="0 0 32 28">
        <rect x="1.500" y="2" width="27" height="23" rx="1" fill="#242424" stroke="#111" />
        <text x="4.500" y="10" fontFamily="Liberation Mono, monospace" fontWeight="700" fontSize="7" fill="#fff">&gt;_</text>
      </svg>
      <Dot />
    </DockRow>
    <DockRule />
    <DockRow>
      <svg width="32" height="30" viewBox="0 0 32 30">
        <path d="M4 3H26L22.500 29H7.500Z" fill="#eeeeee" stroke="#bbb" strokeWidth="0.800" />
        <path d="M5 5L8 2L11 5L14 2L17 5L20 2L24 5" stroke="#6b6b6b" strokeWidth="2" fill="none" />
        <path d="M10 9L11 26M15 9V26M20 9L19 26" stroke="#d2d2d2" />
      </svg>
    </DockRow>
  </>
);

export default function App() {
  return (
    <Desktop>
      <Global />
      <Wisps width="190" height="370" viewBox="0 0 190 370">
        <path d="M0 115Q90 105 190 95V140Q120 160 60 145Q20 140 0 150Z" fill="#566189" opacity="0.350" />
        <path d="M0 200Q80 175 190 150V185Q100 215 0 225Z" fill="#4f5c82" opacity="0.350" />
        <path d="M70 285Q120 290 190 272V288Q120 305 70 298Z" fill="#b68a90" opacity="0.350" />
        <path d="M0 345Q100 345 190 332V350Q90 352 0 360Z" fill="#dba890" opacity="0.400" />
      </Wisps>

      <DesktopItem $x={2354} $y={88}>
        <FolderIcon />
        <DesktopLabel>Desktops</DesktopLabel>
      </DesktopItem>
      <DesktopItem $x={2364} $y={268}>
        <FolderIcon />
        <DesktopLabel>blue</DesktopLabel>
      </DesktopItem>

      <BackWindow>
        <BackStrip />
        <BackToolbar>
          <ToolIcons $dim>
            <MdExtension size={34} />
            <SidePanel />
            <Avatar>J</Avatar>
          </ToolIcons>
        </BackToolbar>
        <BackLine />
      </BackWindow>

      <Dock><DockApps /></Dock>

      <WindowShadow />
      <BrowserWindow>
        <TabStrip>
          <Lights>
            <Light $c="#fe5f57" $b="#e0493f" />
            <Light $c="#febb2f" $b="#df9f28" />
            <Light $c="#29c840" $b="#1dab2c" />
          </Lights>
          <ActiveTab>
            <Globe />
            <TabTitle $w={26}>Na</TabTitle>
            <CloseIcon width="18" height="18" viewBox="0 0 18 18">
              <path d="M1.500 1.500L16.500 16.500M16.500 1.500L1.500 16.500" stroke="#1f2125" strokeWidth="3" />
            </CloseIcon>
          </ActiveTab>
          {tabs.map(([icon, title, w], i) => (
            <Tab key={i} $w={w}>
              <Favicon>{favicons[icon]}</Favicon>
              <TabTitle $w={64}>{title}</TabTitle>
            </Tab>
          ))}
          <StripTail>
            <svg width="25" height="25" viewBox="0 0 25 25"><path d="M12.500 0V25M0 12.500H25" stroke="#1f2125" strokeWidth="3.200" /></svg>
            <svg width="20" height="12" viewBox="0 0 20 12"><path d="M1.500 1.500L10 10L18.500 1.500" fill="none" stroke="#1f2125" strokeWidth="3" /></svg>
          </StripTail>
        </TabStrip>

        <Toolbar>
          <NavButton $w={64}><MdArrowBack size={38} /></NavButton>
          <NavButton $w={64} $dim><MdArrowForward size={38} /></NavButton>
          <NavButton $w={64}><MdRefresh size={39} /></NavButton>
          <Omnibox>
            <MdInfoOutline size={32} />
            <Scheme>File</Scheme>
            <Divider />
            <Url>/Users/jackbullen/Desktop/GHW/HousingPrices/web/index.html</Url>
            <OmniIcon $w={63}><MdIosShare size={32} /></OmniIcon>
            <OmniIcon $w={38}><MdStarBorder size={36} /></OmniIcon>
          </Omnibox>
          <ToolIcons>
            <MdExtension size={35} />
            <SidePanel />
            <Avatar>J</Avatar>
            <MoreIcon width="8" height="28" viewBox="0 0 8 28">
              <circle cx="4" cy="4" r="3.200" fill="#1f2125" /><circle cx="4" cy="14" r="3.200" fill="#1f2125" /><circle cx="4" cy="24" r="3.200" fill="#1f2125" />
            </MoreIcon>
          </ToolIcons>
        </Toolbar>

        <Viewport>
          <Page>
            {listings.map((l) => (
              <Card key={l.address} $h={l.height}>
                <ListingMap data={l.map} />
                <CardBody>
                  <Address>{l.address}</Address>
                  <Facts>{l.facts.map((f) => <Fact key={f}>{f}</Fact>)}</Facts>
                  <Accordion><AccordionTitle>Description</AccordionTitle></Accordion>
                  <Accordion $open={!!l.details}>
                    <AccordionTitle>Details</AccordionTitle>
                    {l.details?.map((d, i) => <DetailLine key={i}>{d}</DetailLine>)}
                  </Accordion>
                </CardBody>
              </Card>
            ))}
          </Page>
          <ScrollTrack><ScrollThumb /></ScrollTrack>
        </Viewport>
      </BrowserWindow>

      <MenuBar>
        <AppleMark />
        <MenuItems>
          {menus.map(([m, w], i) => <MenuItem key={m} $w={w} $bold={i === 0}>{m}</MenuItem>)}
        </MenuItems>
        <StatusIcons />
      </MenuBar>
    </Desktop>
  );
}
